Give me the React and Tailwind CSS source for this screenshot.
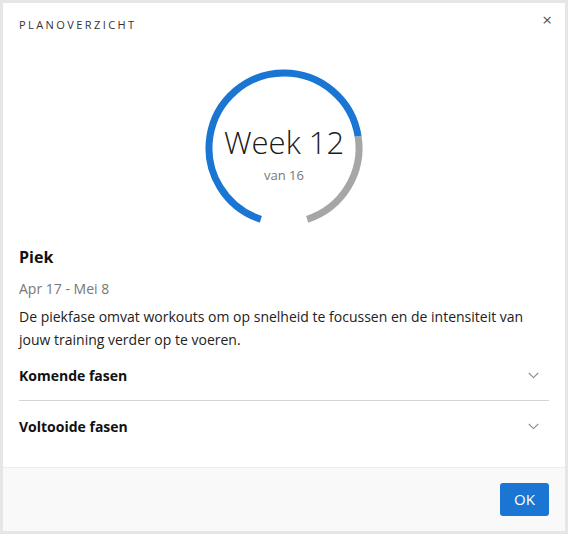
import React from "react";

// ── Progress ring ─────────────────────────────────────────────────────────
const polar = (cx, cy, r, deg) => {
  const a = (deg * Math.PI) / 180;
  return [cx + r * Math.cos(a), cy + r * Math.sin(a)];
};

const arc = (cx, cy, r, from, to) => {
  const [x1, y1] = polar(cx, cy, r, from);
  const [x2, y2] = polar(cx, cy, r, to);
  const large = to - from > 180 ? 1 : 0;
  return `M ${x1} ${y1} A ${r} ${r} 0 ${large} 1 ${x2} ${y2}`;
};

const Ring = ({ week, total }) => {
  const start = 108;
  const span = 324;
  const mid = start + span * (week / total);
  return (
    <div className="relative w-[170px] h-[170px]">
      <svg width="170" height="170" viewBox="0 0 170 170" className="absolute inset-0">
        <path d={arc(85, 85, 75, mid, start + span)} fill="none" stroke="#a6a6a6" strokeWidth="7" />
        <path d={arc(85, 85, 75, start, mid)} fill="none" stroke="#1a76d2" strokeWidth="7" />
      </svg>
      <div className="absolute inset-0 flex flex-col items-center justify-center">
        <span className="text-[31px] font-light leading-none text-[#1a1a1a] mt-[16px]">Week {week}</span>
        <span className="text-[13px] text-[#777] mt-[8px]">van {total}</span>
      </div>
    </div>
  );
};

const Chevron = () => (
  <svg width="11" height="7" viewBox="0 0 11 7" fill="none">
    <path d="M0.8 1 L5.5 5.6 L10.2 1" stroke="#8a8a8a" strokeWidth="1.1" />
  </svg>
);

const App = () => {
  return (
    <div
      className="w-[568px] h-[534px] border-[3px] border-[#e6e6e6] bg-white flex flex-col"
      style={{ fontFamily: '"Open Sans", sans-serif' }}
    >
      {/* Body */}
      <div className="flex-1 px-4">
        <div className="flex items-start justify-between pt-[14px]">
          <span className="text-[11px] leading-4 tracking-[0.22em] text-[#333]">PLANOVERZICHT</span>
          <span className="text-[17px] leading-4 text-[#555] mt-[-5px] mr-[-3px]">×</span>
        </div>

        <div className="flex justify-center mt-[30px]">
          <Ring week={12} total={16} />
        </div>

        <h2 className="mt-[12px] text-[16px] leading-6 font-bold text-[#111]">Piek</h2>
        <p className="mt-[10px] text-[14px] leading-5 text-[#777]">Apr 17 - Mei 8</p>
        <p className="mt-[6px] text-[14px] leading-[23px] text-[#222] max-w-[505px]">
          De piekfase omvat workouts om op snelheid te focussen en de intensiteit van jouw training verder op te voeren.
        </p>

        <div className="h-[50px] flex items-center justify-between border-b border-[#d4d4d4]">
          <span className="text-[14px] font-bold text-[#111]">Komende fasen</span>
          <span className="mr-[10px]"><Chevron /></span>
        </div>
        <div className="h-[51px] flex items-center justify-between">
          <span className="text-[14px] font-bold text-[#111]">Voltooide fasen</span>
          <span className="mr-[10px]"><Chevron /></span>
        </div>
      </div>

      {/* Footer */}
      <div className="h-[64px] shrink-0 border-t border-[#ececec] bg-[#f9f9f9] flex items-center justify-end px-4">
        <button className="w-[49px] h-[33px] rounded-[3px] bg-[#1a76d2] text-white text-[15px]">OK</button>
      </div>
    </div>
  );
};

export default App;
